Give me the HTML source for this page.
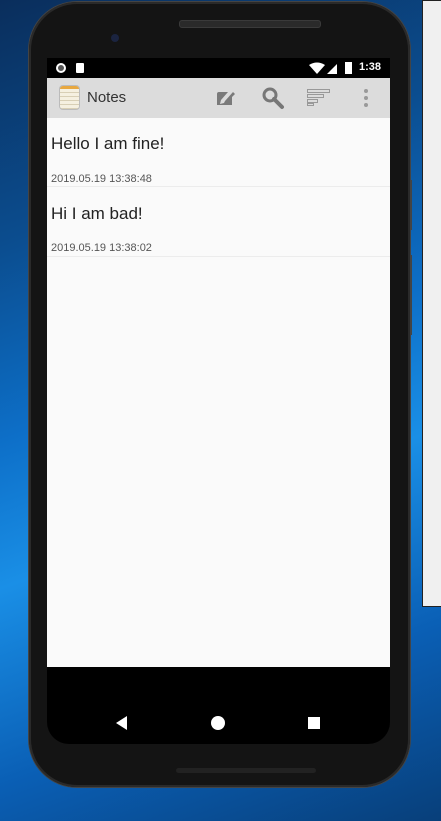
<!DOCTYPE html>
<html><head><style>
body{margin:0;width:441px;height:821px;overflow:hidden;position:relative;font-family:"Liberation Sans",Roboto,sans-serif;
background:linear-gradient(160deg,#0a2e5c 0%,#0b4d8f 25%,#0d6fc8 45%,#1a8fe6 60%,#0a5fb5 80%,#083f7a 100%);}
.panel{position:absolute;left:422px;top:0;width:19px;height:607px;background:#f0f0f0;border:1px solid #222;box-sizing:border-box;border-right:none}
.phone{position:absolute;left:29px;top:2px;width:381px;height:785px;background:#141414;border-radius:48px;box-shadow:0 0 0 1px #444,inset 0 0 0 2px #2a2a2a}
.btn{position:absolute;left:409px;width:3px;background:#444}
.speaker{position:absolute;left:150px;top:18px;width:140px;height:6px;border-radius:3px;background:#2a2a2a;border:1px solid #3a3a3a}
.speaker2{position:absolute;left:147px;top:766px;width:140px;height:5px;border-radius:3px;background:#222}
.cam{position:absolute;left:82px;top:32px;width:8px;height:8px;border-radius:50%;background:#1b2440}
.screen{position:absolute;left:47px;top:58px;width:343px;height:686px;background:#000;border-radius:0 0 22px 22px;overflow:hidden}
.status{height:20px;color:#fff;font-size:11px;font-weight:bold;position:relative}
.bar{position:absolute;top:20px;left:0;width:343px;height:40px;background:#dcdcdc}
.content{position:absolute;top:60px;left:0;width:343px;height:549px;background:#fafafa}
.title{position:absolute;left:4px;font-size:17px;color:#222}
.date{position:absolute;left:4px;font-size:11px;color:#555}
.sep{position:absolute;left:0;width:343px;height:1px;background:#ececec}
</style></head><body>
<div class="panel"></div>
<div class="btn" style="top:180px;height:50px"></div>
<div class="btn" style="top:255px;height:80px"></div>
<div class="phone">
<div class="speaker"></div><div class="cam"></div><div class="speaker2"></div>
</div>
<div class="screen">
 <div class="status">
  <div style="position:absolute;left:9px;top:5px;width:10px;height:10px;border-radius:50%;background:#fff"><div style="margin:2px;width:6px;height:6px;border-radius:50%;background:#555"></div></div>
  <div style="position:absolute;left:29px;top:5px;width:8px;height:10px;background:#fff;border-radius:1px"></div>
  <svg style="position:absolute;left:262px;top:4px" width="30" height="12"><path d="M0 3 Q8 -2 16 3 L8 12Z" fill="#fff"/><path d="M18 12 L28 2 L28 12Z" fill="#fff"/></svg>
  <div style="position:absolute;left:298px;top:4px;width:7px;height:12px;background:#fff"></div>
  <span style="position:absolute;left:312px;top:3px">1:38</span>
 </div>
 <div class="bar">
  <div style="position:absolute;left:13px;top:8px;width:19px;height:23px;border-radius:3px;background:repeating-linear-gradient(#f5f0e0 0 3px,#d8cfb5 3px 4px);border-top:3px solid #e8a840;box-sizing:border-box;box-shadow:0 0 0 1px #bbb"></div>
  <span style="position:absolute;left:40px;top:11px;font-size:15px;color:#333">Notes</span>
  <svg style="position:absolute;left:169px;top:11px" width="20" height="18"><path d="M1 5 Q1 3 3 3 L12 3 L5 11 L4 15 L8 14 L16 6 L16 16 L1 16Z" fill="#7a7a7a"/><path d="M9 12 L17 3 L19 5 L11 13 L8 14Z" fill="#7a7a7a"/></svg>
  <svg style="position:absolute;left:214px;top:8px" width="24" height="24"><circle cx="9" cy="9" r="6" fill="none" stroke="#777" stroke-width="3"/><path d="M13 13 L21 21" stroke="#777" stroke-width="4" stroke-linecap="round"/></svg>
  <svg style="position:absolute;left:260px;top:11px" width="24" height="18"><g fill="none" stroke="#999"><rect x="0.5" y="0.5" width="22" height="3"/><rect x="0.5" y="5.5" width="16" height="3"/><rect x="0.5" y="10.5" width="10" height="3"/><rect x="0.5" y="14.5" width="6" height="2"/></g></svg>
  <svg style="position:absolute;left:316px;top:10px" width="6" height="20"><circle cx="3" cy="3" r="2" fill="#999"/><circle cx="3" cy="10" r="2" fill="#999"/><circle cx="3" cy="17" r="2" fill="#999"/></svg>
 </div>
 <div class="content">
  <div class="title" style="top:16px">Hello I am fine!</div>
  <div class="date" style="top:55px">2019.05.19 13:38:48</div>
  <div class="sep" style="top:68px"></div>
  <div class="title" style="top:86px">Hi I am bad!</div>
  <div class="date" style="top:124px">2019.05.19 13:38:02</div>
  <div class="sep" style="top:138px"></div>
 </div>
 <svg style="position:absolute;left:68px;top:657px" width="14" height="16"><path d="M12 1 L12 15 L1 8Z" fill="#fff"/></svg>
 <div style="position:absolute;left:164px;top:658px;width:14px;height:14px;border-radius:50%;background:#fff"></div>
 <div style="position:absolute;left:261px;top:659px;width:12px;height:12px;background:#fff"></div>
</div>
</body></html>
